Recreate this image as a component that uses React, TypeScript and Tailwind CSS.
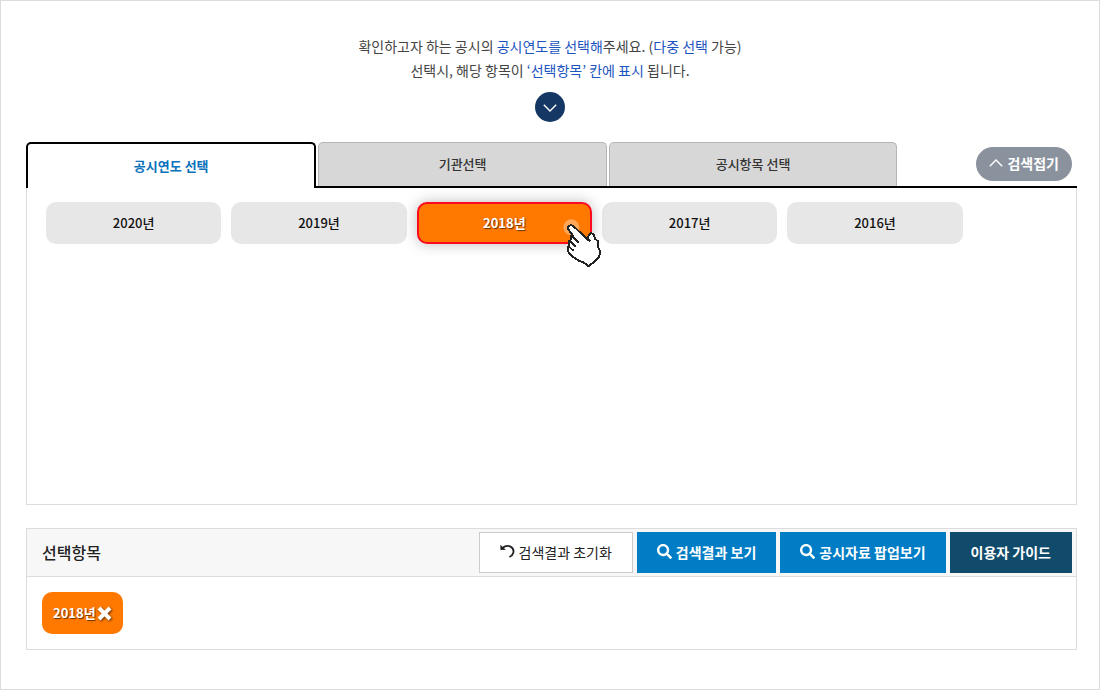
import React, { useState } from "react";
import { FaSearch } from "react-icons/fa";

const TABS = ["공시연도 선택", "기관선택", "공시항목 선택"];
const YEARS = ["2020년", "2019년", "2018년", "2017년", "2016년"];

function Chevron({ up = false, className = "" }: { up?: boolean; className?: string }) {
  return (
    <svg className={className} viewBox="0 0 14 8" fill="none" stroke="currentColor" strokeWidth="1.4">
      <path d={up ? "M0.8 7.2 7 1l6.2 6.2" : "M0.8 0.8 7 7l6.2-6.2"} />
    </svg>
  );
}

function UndoIcon() {
  return (
    <svg className="w-[15px] h-[15px]" viewBox="0 0 15 15" fill="none" stroke="currentColor" strokeWidth="1.8">
      <path d="M2 4.2C5 2 8 1.4 10.4 2.6c2.4 1.200 3.500 3.700 2.900 6.200-.5 2-1.800 3.300-3.900 4.200" />
      <path d="M0.3 0.8 0.5 6l5.4-.2z" fill="currentColor" stroke="none" />
    </svg>
  );
}

function HandPointer() {
  return (
    <svg
      className="absolute -right-[14px] -bottom-[26px] w-11 h-[52px] pointer-events-none"
      viewBox="0 0 132 156"
      aria-hidden="true"
    >
      <circle cx="28" cy="28" r="24" fill="#fff" fillOpacity="0.35" />
      <path
        d="M19 34 19 25 27 21 35 25 78 66 80 50 87 45 95 50 99 62 108 70 109 88 115 103 110 118 98 130 80 145 66 134 50 128 32 116 19 102 17 86 22 82 20 70 26 66 26 54 34 54z"
        fill="#fff"
        stroke="#222"
        strokeWidth="6"
        strokeLinejoin="bevel"
        shapeRendering="crispEdges"
      />
      <path
        d="M32 56l18 18M24 68l18 18M19 84l16 15M78 62l8 8"
        fill="none"
        stroke="#222"
        strokeWidth="6"
        shapeRendering="crispEdges"
      />
    </svg>
  );
}

export default function App() {
  const [tab, setTab] = useState(0);
  const [selected, setSelected] = useState<string[]>(["2018년"]);

  const toggle = (year: string) => {
    setSelected((prev) => (prev.includes(year) ? prev.filter((y) => y !== year) : [...prev, year]));
  };

  return (
    <div className="min-h-screen border border-[#dcdcdc] bg-white pt-[33px] pb-[39px] font-['Noto_Sans_CJK_KR',sans-serif] text-[#222]">
      {/* Guide text */}
      <header className="flex flex-col items-center text-center text-sm leading-6 text-[#444]">
        <p>
          확인하고자 하는 공시의 <span className="text-[#1c54c0]">공시연도를 선택해</span>주세요. (
          <span className="text-[#1c54c0]">다중 선택</span> 가능)
        </p>
        <p>
          선택시, 해당 항목이 <span className="text-[#1c54c0]">‘선택항목’ 칸에 표시</span> 됩니다.
        </p>
        <span className="mt-[10px] w-[30px] h-[30px] rounded-full bg-[#143764] text-white flex items-center justify-center">
          <Chevron className="w-3.5 h-2 mt-0.5" />
        </span>
      </header>

      <main className="mt-5 pl-[25px] pr-[22px]">
        {/* Tabs */}
        <div className="flex items-end justify-between relative">
          <div className="absolute inset-x-0 bottom-0 h-0.5 bg-black" />
          <div className="flex gap-0.5 w-[82.9%] h-[46px] relative" role="tablist">
            {TABS.map((label, i) => (
              <button
                key={label}
                role="tab"
                aria-selected={tab === i}
                onClick={() => setTab(i)}
                className={
                  tab === i
                    ? "flex-1 border-2 border-b-0 border-black rounded-t-[5px] bg-white text-[#0a72ba] text-[13px] font-bold"
                    : "flex-1 mb-0.5 pb-0.5 border border-b-0 border-[#b5b5b5] rounded-t-[5px] bg-[#d7d7d7] text-[#333] text-[13px] font-medium"
                }
              >
                {label}
              </button>
            ))}
          </div>
          <button className="mb-[7px] mr-[5px] h-[34px] px-[13px] pb-0.5 rounded-full bg-[#8a929e] text-white text-sm font-bold flex items-center gap-1">
            <Chevron up className="w-3.5 h-2" />
            검색접기
          </button>
        </div>

        {/* Year list */}
        <section className="min-h-[317px] border border-t-0 border-[#dcdcdc] pt-[14px] pl-[19px]">
          <div className="grid grid-cols-5 gap-[10px] w-[89%]">
            {YEARS.map((year) => {
              const on = selected.includes(year);
              return (
                <div key={year} className={on ? "relative z-10" : "relative"}>
                  <button
                    aria-pressed={on}
                    onClick={() => toggle(year)}
                    className={
                      on
                        ? "w-full h-[42px] rounded-[10px] border-2 border-[#fb0a20] bg-[#ff7900] text-white text-[13px] font-bold text-shadow-[1px_1px_1px_#0009] shadow-[0_0_14px_#0004]"
                        : "w-full h-[42px] rounded-[10px] bg-[#e7e7e7] text-[#111] text-[13px] font-medium"
                    }
                  >
                    {year}
                  </button>
                  {year === "2018년" && <HandPointer />}
                </div>
              );
            })}
          </div>
        </section>

        {/* Selected items */}
        <section className="mt-[23px] border border-[#dcdcdc]">
          <div className="flex items-center justify-between h-12 pl-[15px] pr-1 border-b border-[#dcdcdc] bg-[#f7f7f7]">
            <h2 className="text-base font-medium pb-0.5">선택항목</h2>
            <div className="flex gap-1 text-sm">
              <button
                onClick={() => setSelected([])}
                className="h-[41px] px-5 pb-0.5 border border-[#ccc] bg-white text-[#222] flex items-center gap-1"
              >
                <UndoIcon />
                검색결과 초기화
              </button>
              <button className="h-[41px] px-5 pb-0.5 bg-[#007dc5] text-white font-bold flex items-center gap-1">
                <FaSearch className="w-[15px] h-[15px]" />
                검색결과 보기
              </button>
              <button className="h-[41px] px-5 pb-0.5 bg-[#007dc5] text-white font-bold flex items-center gap-1">
                <FaSearch className="w-[15px] h-[15px]" />
                공시자료 팝업보기
              </button>
              <button className="h-[41px] px-[21px] pb-0.5 bg-[#104b6c] text-white font-bold">이용자 가이드</button>
            </div>
          </div>
          <div className="flex gap-2 min-h-[72px] pt-[15px] pl-[15px]">
            {selected.map((year) => (
              <button
                key={year}
                onClick={() => toggle(year)}
                aria-label={`${year} 삭제`}
                className="h-[42px] px-[11px] rounded-[10px] bg-[#ff7900] text-white text-[13px] font-bold text-shadow-[1px_1px_1px_#0009] flex items-center gap-px"
              >
                {year}
                <svg className="w-[15px] h-[15px] drop-shadow-[1px_1px_1px_#0009]" viewBox="0 0 15 15" stroke="currentColor" strokeWidth="4">
                  <path d="M2 2l11 11M13 2 2 13" />
                </svg>
              </button>
            ))}
          </div>
        </section>
      </main>
    </div>
  );
}
